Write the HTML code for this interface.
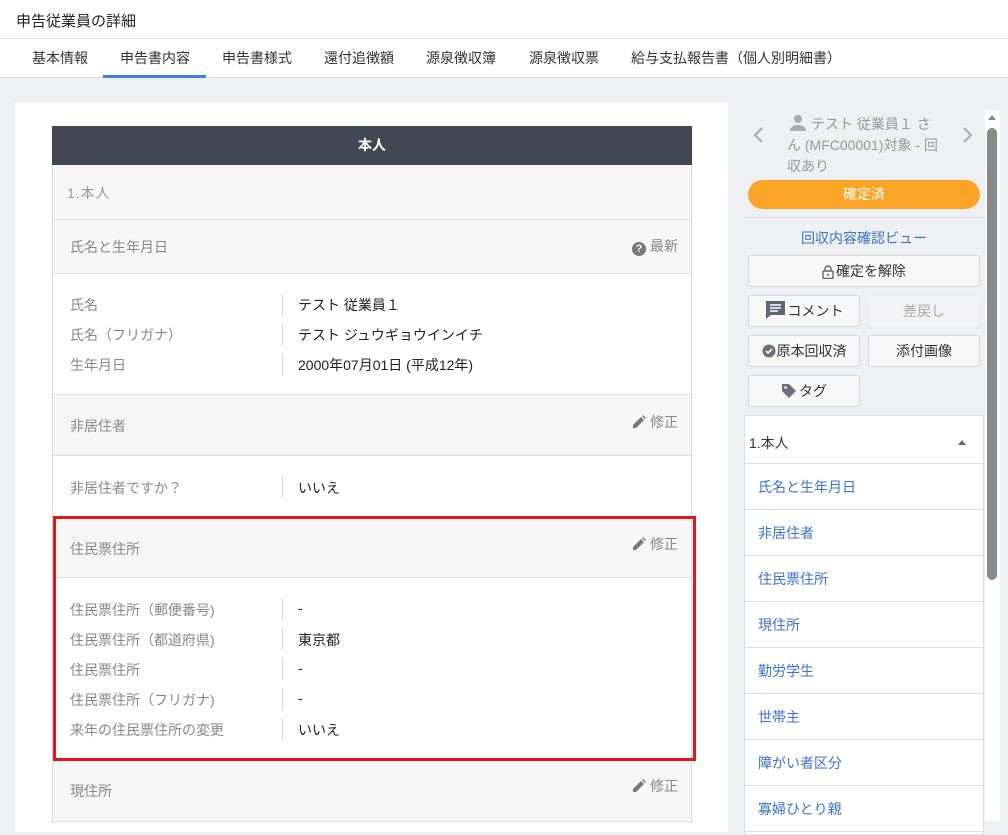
<!DOCTYPE html>
<html><head><meta charset="utf-8"><style>
*{box-sizing:border-box;margin:0;padding:0}
body{width:1008px;height:821px;overflow:hidden;background:#eef0f4;font-family:"Liberation Sans","Noto Sans CJK JP",sans-serif;position:relative;color:#333}
.a{position:absolute}
.top{left:0;top:0;width:1008px;height:78px;background:#fff}
.t{font-size:14px;white-space:nowrap}
.sec{position:absolute;left:52px;width:640px;background:#f7f7f7;border:1px solid #dcdce0;border-top:none}
.data{position:absolute;left:52px;width:640px;background:#fff;border:1px solid #dcdce0;border-top:none}
.lbl{position:absolute;left:17px;font-size:14px;color:#888}
.val{position:absolute;left:245px;font-size:14px;color:#222}
.sep{position:absolute;left:229px;width:1px;height:22px;background:#ddd}
.edit{position:absolute;right:13px;font-size:14px;color:#888;white-space:nowrap}
.edit svg{vertical-align:-1px;margin-right:4px}
.btn{position:absolute;background:#f8f8f9;border:1px solid #d6d6da;border-radius:3px;font-size:14px;color:#333;text-align:center;line-height:30px;height:32px;white-space:nowrap}
.btn svg{vertical-align:-3px;margin-right:2px}
.nav{position:absolute;left:745px;width:238px;height:46px;background:#fff;border-bottom:1px solid #ddd;font-size:14px;color:#3b73c9;padding-left:13px;line-height:46px}
</style></head><body>
<div class="a top"></div>
<div class="a t" style="left:16px;top:10px;font-size:15px;color:#222">申告従業員の詳細</div>
<div class="a" style="left:0;top:38px;width:1008px;height:1px;background:#dcdce0"></div>
<div class="a" style="left:0;top:77px;width:1008px;height:1px;background:#dcdce0"></div>
<div class="a t" style="left:32px;top:48px;color:#333">基本情報</div>
<div class="a t" style="left:120px;top:48px;color:#333">申告書内容</div>
<div class="a" style="left:103px;top:75px;width:103px;height:3px;background:#3b7fe0"></div>
<div class="a t" style="left:222px;top:48px">申告書様式</div>
<div class="a t" style="left:324px;top:48px">還付追徴額</div>
<div class="a t" style="left:426px;top:48px">源泉徴収簿</div>
<div class="a t" style="left:529px;top:48px">源泉徴収票</div>
<div class="a t" style="left:631px;top:48px">給与支払報告書（個人別明細書）</div>

<div class="a" style="left:15px;top:102px;width:713px;height:730px;background:#fff"></div>
<div class="a" style="left:52px;top:126px;width:640px;height:39px;background:#424853;color:#fff;font-weight:bold;font-size:14px;text-align:center;line-height:39px">本人</div>

<div class="sec" style="top:165px;height:55px"><div class="lbl" style="left:14px;top:18px;color:#999;letter-spacing:1px">1.本人</div></div>
<div class="sec" style="top:220px;height:54px"><div class="lbl" style="top:17px">氏名と生年月日</div>
<div class="edit" style="top:16px"><span style="display:inline-block;width:14px;height:14px;border-radius:7px;background:#777;color:#fff;font-size:11px;text-align:center;line-height:14px;font-weight:bold;vertical-align:-1px;margin-right:4px">?</span>最新</div></div>
<div class="data" style="top:274px;height:121px">
<div class="lbl" style="top:21px">氏名</div><div class="sep" style="top:20px"></div><div class="val" style="top:21px">テスト 従業員１</div>
<div class="lbl" style="top:51px">氏名（フリガナ）</div><div class="sep" style="top:50px"></div><div class="val" style="top:51px">テスト ジュウギョウインイチ</div>
<div class="lbl" style="top:81px">生年月日</div><div class="sep" style="top:80px"></div><div class="val" style="top:81px">2000年07月01日 (平成12年)</div>
</div>
<div class="sec" style="top:395px;height:61px"><div class="lbl" style="top:21px">非居住者</div><div class="edit" style="top:17px"><svg width="13" height="13" viewBox="0 0 13 13"><path d="M0 13v-3l8-8 3 3-8 8z M9 1l1-1 3 3-1 1z" fill="#777"/></svg>修正</div></div>
<div class="data" style="top:456px;height:61px"><div class="lbl" style="top:22px">非居住者ですか？</div><div class="sep" style="top:20px"></div><div class="val" style="top:22px">いいえ</div></div>
<div class="sec" style="top:517px;height:61px"><div class="lbl" style="top:22px">住民票住所</div><div class="edit" style="top:17px"><svg width="13" height="13" viewBox="0 0 13 13"><path d="M0 13v-3l8-8 3 3-8 8z M9 1l1-1 3 3-1 1z" fill="#777"/></svg>修正</div></div>
<div class="data" style="top:578px;height:183px">
<div class="lbl" style="top:22px">住民票住所（郵便番号)</div><div class="sep" style="top:20px"></div><div class="val" style="top:22px">-</div>
<div class="lbl" style="top:52px">住民票住所（都道府県)</div><div class="sep" style="top:50px"></div><div class="val" style="top:52px">東京都</div>
<div class="lbl" style="top:82px">住民票住所</div><div class="sep" style="top:80px"></div><div class="val" style="top:82px">-</div>
<div class="lbl" style="top:112px">住民票住所（フリガナ)</div><div class="sep" style="top:110px"></div><div class="val" style="top:112px">-</div>
<div class="lbl" style="top:142px">来年の住民票住所の変更</div><div class="sep" style="top:140px"></div><div class="val" style="top:142px">いいえ</div>
</div>
<div class="a" style="left:53px;top:516px;width:643px;height:245px;border:3px solid #e8141a"></div>
<div class="sec" style="top:761px;height:61px"><div class="lbl" style="top:20px">現住所</div><div class="edit" style="top:15px"><svg width="13" height="13" viewBox="0 0 13 13"><path d="M0 13v-3l8-8 3 3-8 8z M9 1l1-1 3 3-1 1z" fill="#777"/></svg>修正</div></div>

<!-- sidebar -->
<svg class="a" style="left:752px;top:126px" width="12" height="18" viewBox="0 0 12 18"><path d="M10 2L3 9l7 7" stroke="#aaa" stroke-width="2" fill="none"/></svg>
<svg class="a" style="left:962px;top:126px" width="12" height="18" viewBox="0 0 12 18"><path d="M2 2l7 7-7 7" stroke="#aaa" stroke-width="2" fill="none"/></svg>
<svg class="a" style="left:789px;top:114px" width="18" height="18" viewBox="0 0 18 18"><circle cx="9" cy="5" r="4" fill="#aaa"/><path d="M1 17c0-4 4-6 8-6s8 2 8 6z" fill="#aaa"/></svg>
<div class="a" style="left:787px;top:114px;width:170px;font-size:14px;color:#999;line-height:21px;white-space:nowrap"><span style="padding-left:24px">テスト 従業員１ さ</span><br>ん (MFC00001)対象 - 回<br>収あり</div>
<div class="a" style="left:748px;top:180px;width:232px;height:29px;border-radius:15px;background:#fba526;color:#fff;font-size:14px;text-align:center;line-height:29px">確定済</div>
<div class="a" style="left:744px;top:217px;width:240px;height:1px;background:#ddd"></div>
<div class="a" style="left:744px;top:228px;width:240px;text-align:center;font-size:14px;color:#3b73c9">回収内容確認ビュー</div>
<div class="btn" style="left:748px;top:255px;width:232px"><svg width="12" height="14" viewBox="0 0 12 14"><path d="M3 6V4a3 3 0 0 1 6 0v2" stroke="#666" stroke-width="1.4" fill="none"/><rect x="1" y="6" width="10" height="7.5" rx="1" stroke="#666" stroke-width="1.4" fill="none"/><circle cx="6" cy="9.8" r="1" fill="#666"/></svg>確定を解除</div>
<div class="btn" style="left:748px;top:295px;width:112px"><svg width="21" height="19" viewBox="0 0 21 19"><path d="M1 1h19v14H6l-5 4z" fill="#5f6673"/><path d="M5 5h11M5 8h11M5 11h8" stroke="#fff" stroke-width="1.4"/></svg>コメント</div>
<div class="btn" style="left:868px;top:295px;width:112px;color:#aaa;border-color:#eee;background:#f4f4f6">差戻し</div>
<div class="btn" style="left:748px;top:335px;width:112px"><svg width="14" height="14" viewBox="0 0 14 14" style="vertical-align:-2px;margin-right:1px"><circle cx="7" cy="7" r="6.5" fill="#6b707a"/><path d="M4 7l2 2 4-4" stroke="#fff" stroke-width="1.6" fill="none"/></svg>原本回収済</div>
<div class="btn" style="left:868px;top:335px;width:112px">添付画像</div>
<div class="btn" style="left:748px;top:375px;width:112px"><svg width="16" height="16" viewBox="0 0 16 16"><path d="M1 1h7l7 7-7 7-7-7z" fill="#6b707a"/><circle cx="4.5" cy="4.5" r="1.3" fill="#fff"/></svg>タグ</div>
<div class="a" style="left:744px;top:415px;width:240px;height:420px;border:1px solid #ddd;background:#fff"></div>
<div class="a" style="left:749px;top:433px;font-size:14px;color:#333">1.本人</div>
<div class="a" style="left:958px;top:440px;width:0;height:0;border-left:4px solid transparent;border-right:4px solid transparent;border-bottom:5px solid #666"></div>
<div class="a" style="left:745px;top:463px;width:238px;height:1px;background:#ddd"></div>
<div class="nav" style="top:464px">氏名と生年月日</div>
<div class="nav" style="top:510px">非居住者</div>
<div class="nav" style="top:556px">住民票住所</div>
<div class="nav" style="top:602px">現住所</div>
<div class="nav" style="top:648px">勤労学生</div>
<div class="nav" style="top:694px">世帯主</div>
<div class="nav" style="top:740px">障がい者区分</div>
<div class="nav" style="top:786px">寡婦ひとり親</div>
<div class="a" style="left:985px;top:110px;width:15px;height:711px;background:#fff"></div>
<div class="a" style="left:988px;top:115px;width:0;height:0;border-left:4px solid transparent;border-right:4px solid transparent;border-bottom:5px solid #888"></div>
<div class="a" style="left:987px;top:128px;width:10px;height:452px;border-radius:5px;background:#8a8a8a"></div>
</body></html>
